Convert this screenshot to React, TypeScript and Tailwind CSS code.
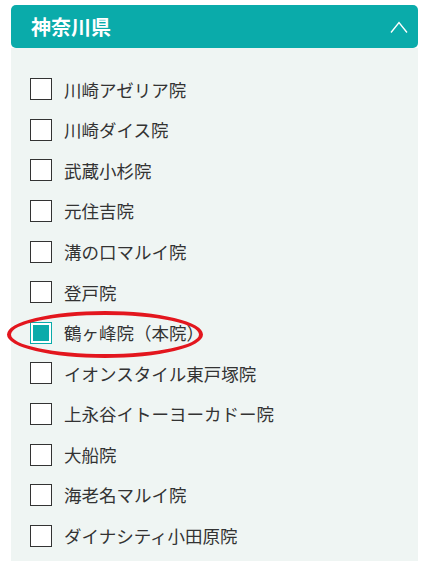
const shops = [
  { name: "川崎アゼリア院" },
  { name: "川崎ダイス院" },
  { name: "武蔵小杉院" },
  { name: "元住吉院" },
  { name: "溝の口マルイ院" },
  { name: "登戸院" },
  { name: "鶴ヶ峰院（本院）", checked: true },
  { name: "イオンスタイル東戸塚院" },
  { name: "上永谷イトーヨーカドー院" },
  { name: "大船院" },
  { name: "海老名マルイ院" },
  { name: "ダイナシティ小田原院" },
];

function Checkbox({ checked }: { checked?: boolean }) {
  if (checked)
    return (
      <span className="flex justify-center items-center bg-white border border-[#0aabaa] w-[22px] h-[22px]">
        <span className="bg-[#0aabaa] w-[16px] h-[16px]" />
      </span>
    );
  return <span className="bg-white border-[1.5px] border-[#333] w-[22px] h-[22px]" />;
}

export default function App() {
  return (
    <div
      className="bg-white px-[11px] pt-[5px] w-[429px] h-[561px] overflow-hidden"
      style={{ fontFamily: '"Noto Sans CJK JP", "Noto Sans", sans-serif' }}
    >
      <div className="flex justify-between items-center bg-[#0aabaa] px-[20px] rounded-[5px] h-[43px] text-white">
        <span className="font-bold text-[20px] leading-none">神奈川県</span>
        <svg width="18" height="12" viewBox="0 0 18 12" fill="none" className="mr-[-10px]">
          <path d="M1 11.5 L9 1.5 L17 11.5" stroke="white" strokeWidth="1.4" />
        </svg>
      </div>
      <ul className="bg-[#eff5f3] pt-[21px] pl-[19px] h-[520px]">
        {shops.map((s) => (
          <li key={s.name} className="relative flex items-center gap-[12px] h-[40.6px]">
            <Checkbox checked={s.checked} />
            <span className="text-[#333] text-[17.5px] leading-none">{s.name}</span>
            {s.checked && (
              <span className="top-[-2px] left-[-23px] absolute border-[#e3161e] border-[4px] rounded-[50%] w-[196px] h-[47px]" />
            )}
          </li>
        ))}
      </ul>
    </div>
  );
}
